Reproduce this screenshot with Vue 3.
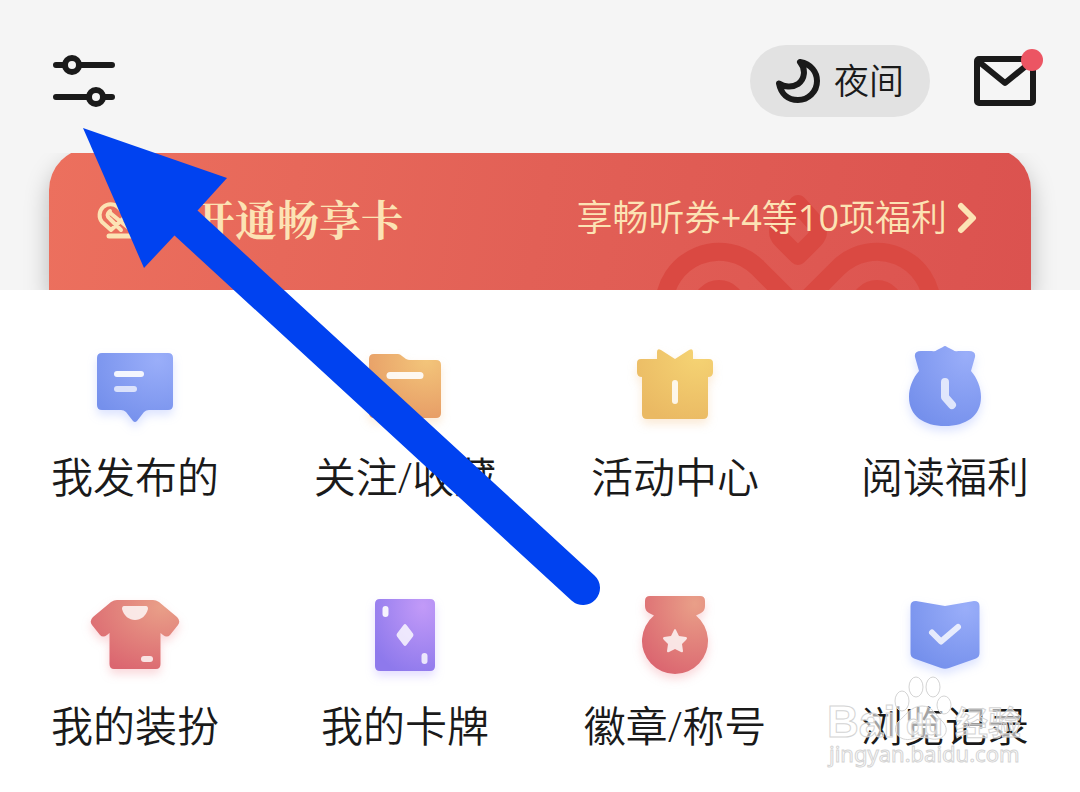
<template>
  <div class="page">
    <header class="top-bar">
      <button class="icon-button" type="button" aria-label="设置">
        <svg width="64" height="54" viewBox="0 0 64 54" fill="none" stroke="#1a1a1a" stroke-width="6" stroke-linecap="round">
          <path d="M4 11H13M27 11H60M4 43H37M51 43H60" />
          <circle cx="20" cy="11" r="7" />
          <circle cx="44" cy="43" r="7" />
        </svg>
      </button>
      <div class="top-actions">
        <button class="night-button" type="button">
          <svg width="44" height="44" viewBox="0 0 44 44" fill="none" stroke="#1a1a1a" stroke-width="6" stroke-linejoin="round">
            <path d="M24 3C35 5 41 13 41 22C41 33 32 41 22 41C12 41 5 35 3 24.500C8 28 16 29 22 25C29 20 30 10 24 3Z" />
          </svg>
          <span>夜间</span>
        </button>
        <button class="icon-button" type="button" aria-label="消息">
          <svg width="62" height="50" viewBox="0 0 62 50" fill="none" stroke="#1a1a1a" stroke-width="6" stroke-linejoin="round">
            <rect x="3" y="3" width="56" height="44" rx="2" />
            <path d="M4 5L31 27L58 5" />
          </svg>
          <span class="badge"></span>
        </button>
      </div>
    </header>

    <section class="banner">
      <a class="card" href="#">
        <svg class="card-pattern" width="300" height="150" viewBox="650 148 300 150" fill="none" stroke="#da4942" stroke-width="18" stroke-linejoin="round">
          <path d="M798 204L782 222Q774 232 782 240L798 256L814 240Q822 232 814 222Z" />
          <path d="M664 307A55 55 0 0 1 758 268L798 308L838 268A55 55 0 0 1 932 307" />
          <circle cx="719" cy="307" r="18" />
          <circle cx="877" cy="307" r="18" />
        </svg>
        <span class="card-title">
          <svg width="48" height="48" viewBox="0 -7 48 48" fill="none" stroke="#fce3b4" stroke-width="4" stroke-linecap="round" stroke-linejoin="round">
            <path d="M14 29L5 21A11 11 0 0 1 21 6L37 22M24 9L27 6A11 11 0 0 1 43 21L34 29L12 11M14 29L28 16M13 10Q8 14 13 18L24 29" />
            <path d="M12 35H36" stroke-width="5" />
          </svg>
          <strong>开通畅享卡</strong>
        </span>
        <span class="card-offer">
          <span>享畅听券<span class="count">+4</span>等<span class="count">10</span>项福利</span>
          <svg width="20" height="32" viewBox="0 0 20 32" fill="none" stroke="#fce3b4" stroke-width="6" stroke-linecap="round" stroke-linejoin="round">
            <path d="M4 4L16 16L4 28" />
          </svg>
        </span>
      </a>
    </section>

    <nav class="menu">
      <a v-for="item in items" :key="item.id" class="menu-item" href="#">
        <svg class="menu-icon" :class="item.tone" viewBox="0 0 90 90">
          <defs>
            <radialGradient :id="'fill-' + item.id" cx="0.800" cy="0.100" r="1">
              <stop offset="0" :stop-color="tones[item.tone][0]" />
              <stop offset="1" :stop-color="tones[item.tone][1]" />
            </radialGradient>
          </defs>
          <path :d="item.shape" :fill="`url(#fill-${item.id})`" />
          <path
            v-for="(mark, index) in item.marks"
            :key="index"
            class="mark"
            :d="mark.d"
            :fill="mark.filled ? '#fff' : 'none'"
            :stroke-width="mark.width"
            :opacity="mark.opacity || 0.8"
          />
        </svg>
        <span class="menu-label">{{ item.label }}</span>
        <svg v-if="item.id === 'history'" class="watermark" width="200" height="100" viewBox="0 0 200 100">
          <g>
            <ellipse cx="76" cy="27" rx="7" ry="10" />
            <ellipse cx="90" cy="13" rx="7" ry="10" />
            <ellipse cx="107" cy="13" rx="7" ry="10" />
            <ellipse cx="118" cy="31" rx="7" ry="9" />
            <path d="M96 32C106 32 109 40 115 46C126 56 118 67 106 65C99 63 93 63 86 65C74 68 65 58 72 48C79 42 85 32 96 32Z" />
          </g>
          <text class="brand" x="1" y="63">Bai</text>
          <text class="brand brand-small" x="80" y="61">du</text>
          <text class="brand brand-cn" x="129" y="61">经验</text>
          <text class="site" x="3" y="88">jingyan.baidu.com</text>
        </svg>
      </a>
    </nav>

    <svg class="pointer" width="620" height="620" viewBox="0 0 620 620">
      <path d="M186 223L583 588" stroke="#0042f0" stroke-width="34" stroke-linecap="round" />
      <path d="M83 128L227 178L198 210L174 236L144 268Z" fill="#0042f0" />
    </svg>
  </div>
</template>

<script setup>
const tones = {
  blue: ['#9aaef9', '#7590ec'],
  orange: ['#f3c57a', '#e69a65'],
  yellow: ['#f5d373', '#eab963'],
  red: ['#e99f88', '#db6670'],
  purple: ['#c29af8', '#8e79ec'],
}

const items = [
  {
    id: 'posts',
    label: '我发布的',
    tone: 'blue',
    shape: 'M12 13H78Q83 13 83 18V65Q83 70 78 70H59Q56 70 54 72L47 81Q45 83 43 81L36 72Q34 70 31 70H12Q7 70 7 65V18Q7 13 12 13Z',
    marks: [
      { d: 'M27 34H51', width: 6, opacity: 0.9 },
      { d: 'M27 49H44', width: 6, opacity: 0.7 },
    ],
  },
  {
    id: 'favorites',
    label: '关注/收藏',
    tone: 'orange',
    shape: 'M14 14H38Q40 14 42 16L46 19Q48 20 50 20H76Q81 20 81 25V73Q81 78 76 78H14Q9 78 9 73V19Q9 14 14 14Z',
    marks: [{ d: 'M30 35.500H60', width: 7, opacity: 0.9 }],
  },
  {
    id: 'events',
    label: '活动中心',
    tone: 'yellow',
    shape: 'M27 19V12Q27 8 31 10L45 19L59 10Q63 8 63 12V19H79Q83 19 83 23V32Q83 37 78 37V74Q78 79 73 79H17Q12 79 12 74V37Q7 37 7 32V23Q7 19 11 19Z',
    marks: [{ d: 'M45 43V61', width: 6, opacity: 0.85 }],
  },
  {
    id: 'benefits',
    label: '阅读福利',
    tone: 'blue',
    shape: 'M43 7Q45 5 47 7L53 10Q55 12 58 11L69 11Q76 11 75 17L71 31C77 38 81 47 81 57C81 76 66 86 45 86C24 86 9 76 9 57C9 47 13 38 19 31L15 17Q14 11 21 11L32 11Q35 12 37 10Z',
    marks: [{ d: 'M45 42V57L52 65', width: 8, opacity: 0.75 }],
  },
  {
    id: 'outfit',
    label: '我的装扮',
    tone: 'red',
    shape: 'M27 11H63Q66 11 69 13L87 28Q91 32 88 36L80 46Q77 49 73 46L70.500 44V75Q70.500 80 66 80H24Q19.500 80 19.500 75V44L17 46Q13 49 10 46L2 36Q-1 32 3 28L21 13Q24 11 27 11Z',
    marks: [
      { d: 'M34 17H56Q58 17 58 20C56 27 51 31 45 31C39 31 34 27 32 20Q32 17 34 17Z', filled: true },
      { d: 'M54 70H60', width: 6 },
    ],
  },
  {
    id: 'cards',
    label: '我的卡牌',
    tone: 'purple',
    shape: 'M20 10H70Q75 10 75 15V77Q75 82 70 82H20Q15 82 15 77V15Q15 10 20 10Z',
    marks: [
      { d: 'M43.500 36Q45 34 46.500 36L53 44.500Q54 46 53 47.500L46.500 56Q45 58 43.500 56L37 47.500Q36 46 37 44.500Z', filled: true },
      { d: 'M25.500 20V25', width: 6, opacity: 0.9 },
      { d: 'M64.500 67V72', width: 6 },
    ],
  },
  {
    id: 'badges',
    label: '徽章/称号',
    tone: 'red',
    shape: 'M20 7H70Q75 7 75 12V17Q75 22 71 24L66 26.500A33 33 0 1 1 24 26.500L19 24Q15 22 15 17V12Q15 7 20 7Z',
    marks: [{ d: 'M44 41Q45 39 46 41L49 47L56 48Q58 49 56 51L52 55L53 62Q53 64 51 63L45 60L39 63Q37 64 37 62L38 55L34 51Q32 49 34 48L41 47Z', filled: true }],
  },
  {
    id: 'history',
    label: '浏览记录',
    tone: 'blue',
    shape: 'M16 12L45 17L74 12Q79.500 12 79.500 17V64Q79.500 68 76 69.500L49 79Q45 80.500 41 79L14 69.500Q10.500 68 10.500 64V17Q10.500 12 16 12Z',
    marks: [{ d: 'M32 43.500L41 52.500L58 38', width: 6 }],
  },
]
</script>

<style>
body {
  margin: 0;
  background: #fff;
}
</style>

<style scoped>
.page {
  position: relative;
  min-height: 100vh;
  overflow: hidden;
  background: #fff;
  color: #1a1a1a;
  font-family: "Open Sans", "Noto Sans CJK SC", sans-serif;
  font-weight: 350;
}

button {
  padding: 0;
  border: 0;
  background: none;
  color: inherit;
  font: inherit;
}

a {
  color: inherit;
  text-decoration: none;
}

svg {
  display: block;
}

.top-bar {
  display: flex;
  align-items: center;
  justify-content: space-between;
  padding: 45px 44px 36px 52px;
  background: #f5f5f5;
}

.top-actions {
  display: flex;
  align-items: center;
  gap: 44px;
}

.icon-button {
  position: relative;
}

.night-button {
  display: flex;
  align-items: center;
  gap: 14px;
  padding: 0 26px;
  border-radius: 36px;
  background: #e2e2e2;
  font-size: 35px;
  line-height: 72px;
}

.badge {
  position: absolute;
  top: -7px;
  right: -7px;
  width: 22px;
  height: 22px;
  border-radius: 50%;
  background: #ec5563;
}

.banner {
  overflow: hidden;
  padding: 0 49px;
  background: #f5f5f5;
}

.card {
  position: relative;
  display: flex;
  align-items: center;
  justify-content: space-between;
  margin-top: -5px;
  padding: 46px 54px 48px 48px;
  border-radius: 42px 42px 0 0;
  background: linear-gradient(100deg, #ec705e, #e26056 50%, #db524f);
  box-shadow: 0 12px 24px rgba(0, 0, 0, 0.25);
  color: #fce3b4;
  line-height: 48px;
}

.card-pattern {
  position: absolute;
  top: 0;
  right: 81px;
}

.card-title,
.card-offer {
  position: relative;
  display: flex;
  align-items: center;
}

.card-title {
  gap: 48px;
}

.card-title strong {
  font-family: "Noto Serif CJK SC", "Noto Sans CJK SC", serif;
  font-size: 42px;
  font-weight: 700;
}

.card-offer {
  gap: 10px;
  font-size: 36px;
}

.count {
  font-weight: 400;
}

.menu {
  display: grid;
  grid-template-columns: repeat(4, 1fr);
  row-gap: 88px;
  padding: 50px 0 40px;
}

.menu-item {
  position: relative;
  display: flex;
  flex-direction: column;
  align-items: center;
  gap: 23px;
}

.menu-icon {
  width: 90px;
  height: 90px;
  overflow: visible;
}

.blue {
  filter: drop-shadow(0 5px 5px rgba(117, 144, 255, 0.25));
}

.orange,
.yellow {
  filter: drop-shadow(0 5px 5px rgba(240, 170, 90, 0.25));
}

.red {
  filter: drop-shadow(0 5px 5px rgba(235, 100, 110, 0.25));
}

.purple {
  filter: drop-shadow(0 5px 5px rgba(142, 121, 255, 0.25));
}

.mark {
  stroke: #fff;
  stroke-linecap: round;
  stroke-linejoin: round;
}

.mark[fill="#fff"] {
  stroke: none;
}

.menu-label {
  font-size: 42px;
  line-height: 48px;
  white-space: nowrap;
}

.watermark {
  position: absolute;
  top: 85px;
  left: 16px;
  overflow: visible;
  fill: rgba(255, 255, 255, 0.6);
  stroke: #d4d4d4;
  stroke-width: 1px;
}

.brand {
  font-family: "Liberation Sans", sans-serif;
  font-size: 44px;
  font-weight: 700;
}

.brand-small {
  font-size: 30px;
}

.brand-cn {
  font-family: "Noto Sans CJK SC", sans-serif;
  font-size: 33px;
}

.site {
  font-family: "Noto Sans", sans-serif;
  font-size: 22px;
  font-weight: 400;
}

.pointer {
  position: absolute;
  top: 0;
  left: 0;
  pointer-events: none;
}
</style>
